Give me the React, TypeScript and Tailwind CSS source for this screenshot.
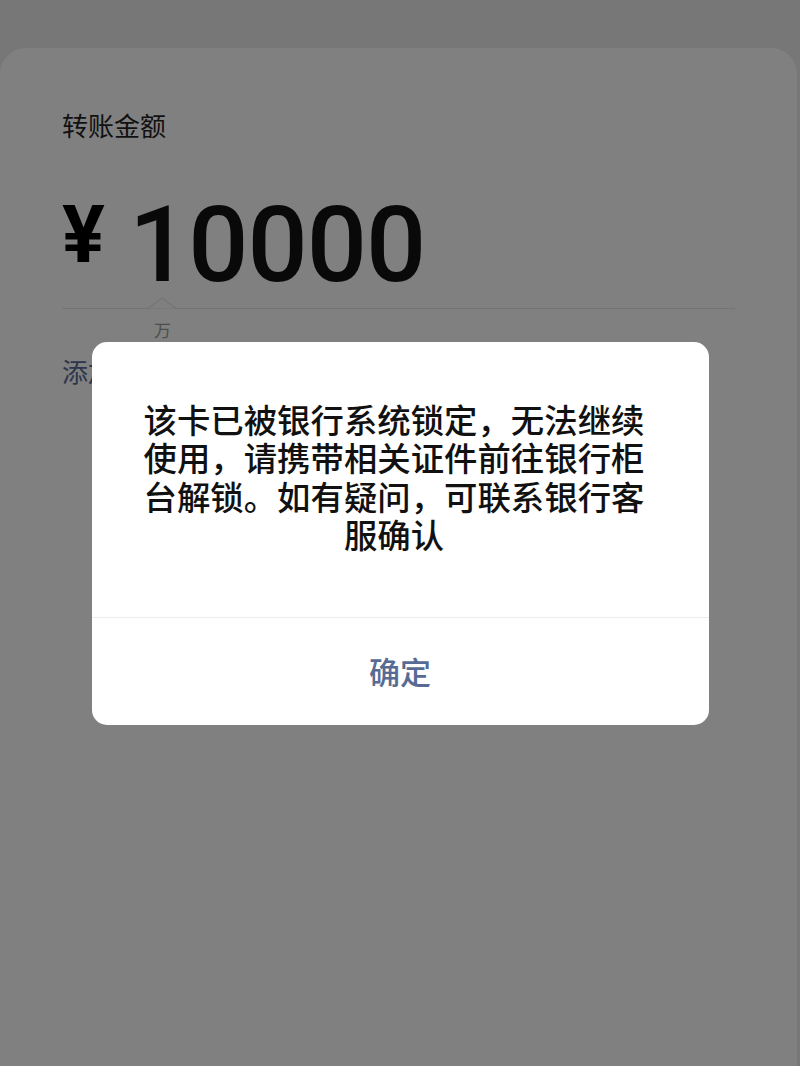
import React from 'react';

const cjk = { fontFamily: '"Noto Sans CJK SC", "Noto Sans", sans-serif' };
const num = { fontFamily: 'Roboto, "Noto Sans", sans-serif' };

// page is shown under the alert's dim layer, so colours are the dimmed ones
const TransferCard: React.FC = () => {
  return (
    <div className="mt-[48px] h-[1018px] w-[797px] rounded-t-[26px] bg-[#808080] pl-[62px] pr-[62px] pt-[58px]" style={cjk}>
      <div className="text-[26px] leading-[38px] text-[#111]">转账金额</div>

      <div className="mt-[48px] flex items-start">
        <span className="mt-[3px] text-[80px] font-bold leading-none text-black" style={num}>¥</span>
        <span className="ml-[24px] text-[106px] font-medium leading-none tracking-[-1px] text-[#090909]" style={num}>10000</span>
      </div>

      <div className="relative mt-[10px] h-px bg-[#747474]">
        <svg className="absolute left-[86px] top-[-11px]" width="28" height="12" viewBox="0 0 28 12">
          <polyline points="0,11.5 14,1 28,11.5" fill="#808080" stroke="#747474" strokeWidth="1.2" />
        </svg>
      </div>
      <div className="ml-[92px] mt-[10px] text-[17px] leading-[22px] text-[#4d4d4d]">万</div>

      <div className="mt-[11px] text-[26px] leading-[38px] text-[#2c364b]">添加转账说明</div>
    </div>
  );
};

const AlertDialog: React.FC = () => {
  return (
    <div className="w-[617px] overflow-hidden rounded-[15px] bg-white" style={cjk}>
      <div className="pl-[44px] pr-[56px] pt-[58px] pb-[63px] text-center text-[33.4px] font-medium leading-[38.5px] text-[#111]">
        该卡已被银行系统锁定，无法继续使用，请携带相关证件前往银行柜台解锁。如有疑问，可联系银行客服确认
      </div>
      <div className="h-px bg-[#ececec]" />
      <button className="flex h-[107px] w-full items-center justify-center text-[31px] font-medium text-[#576b95]">
        确定
      </button>
    </div>
  );
};

export default function App() {
  return (
    <div className="relative h-[1066px] w-[800px] overflow-hidden bg-[#777777]">
      <TransferCard />
      <div className="absolute inset-0 flex items-center justify-center">
        <AlertDialog />
      </div>
    </div>
  );
}
